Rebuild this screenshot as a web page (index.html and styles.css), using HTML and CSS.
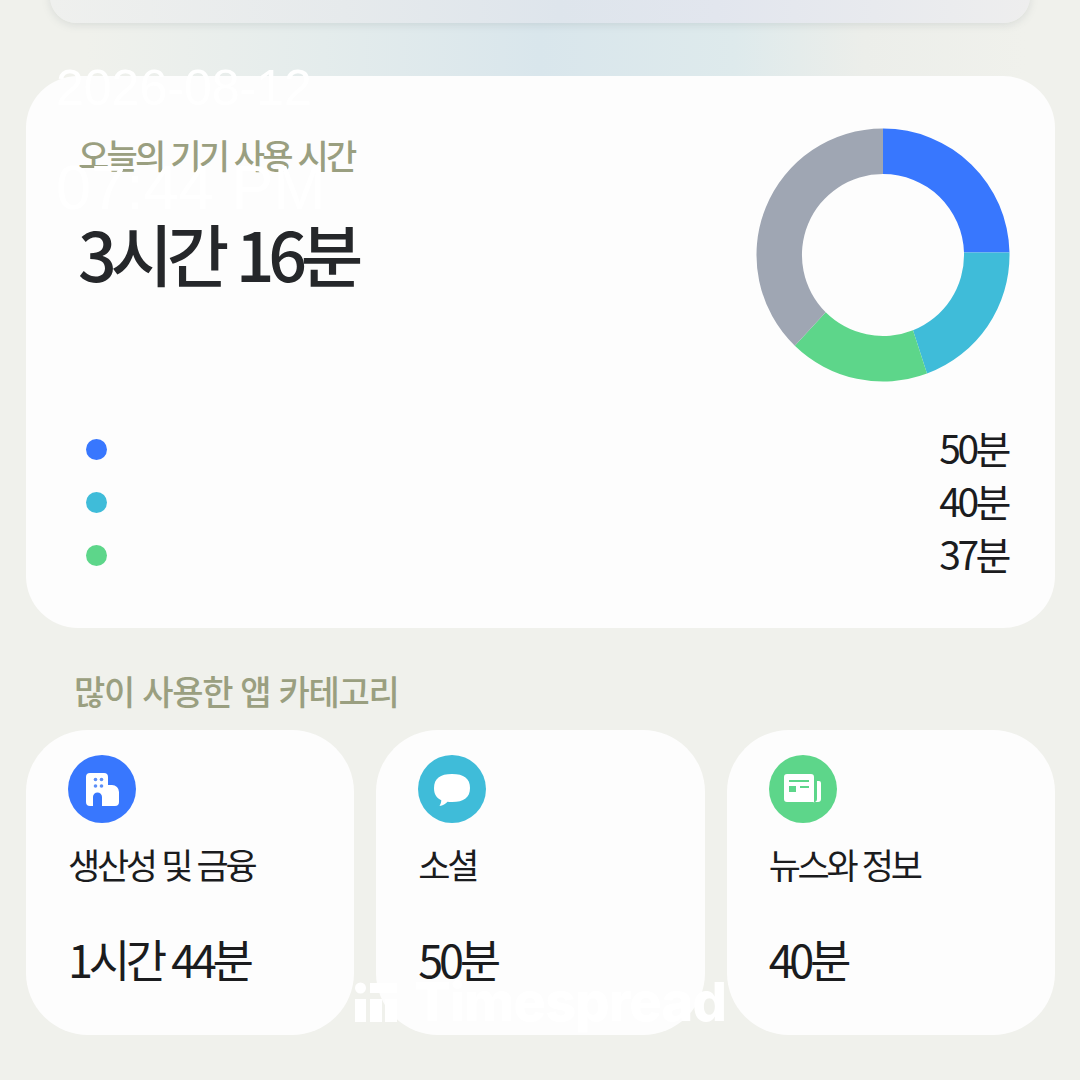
FILE: index.html
```html
<!DOCTYPE html>
<html lang="ko">
<head>
<meta charset="utf-8">
<title>기기 사용 시간</title>
<link rel="stylesheet" href="styles.css">
</head>
<body>
<div class="page">
  <div class="strip"><div class="topcard"></div></div>

  <section class="main">
    <div class="head">
      <div class="head-text">
        <div class="label">오늘의 기기 사용 시간</div>
        <div class="total">3시간 16분</div>
      </div>
      <svg class="donut" width="254" height="254" viewBox="0 0 254 254">
        <path d="M127 .5A126.500 126.500 0 0 1 253.500 124.500L208 124.500A81 81 0 0 0 127 46Z" fill="#3877fe"/>
        <path d="M253.500 124.500A126.500 126.500 0 0 1 171 245.600L157 202.200A81 81 0 0 0 208 124.500Z" fill="#3fbcd9"/>
        <path d="M171 245.600A126.500 126.500 0 0 1 38.800 217.700L69.700 184.300A81 81 0 0 0 157 202.200Z" fill="#5dd68a"/>
        <path d="M38.800 217.700A126.500 126.500 0 0 1 127 .5L127 46A81 81 0 0 0 69.700 184.300Z" fill="#9fa6b3"/>
      </svg>
    </div>
    <ul class="legend">
      <li class="legend-row"><span class="dot dot-blue"></span><span class="value">50분</span></li>
      <li class="legend-row"><span class="dot dot-teal"></span><span class="value">40분</span></li>
      <li class="legend-row"><span class="dot dot-green"></span><span class="value">37분</span></li>
    </ul>
  </section>

  <h2 class="section-title">많이 사용한 앱 카테고리</h2>

  <div class="cards">
    <article class="card">
      <span class="icon dot-blue">
        <svg width="40" height="40" viewBox="0 0 40 40">
          <path fill="#fff" d="M8 4H22a4 4 0 0 1 4 4V16H30a7 7 0 0 1 7 7V33a4 4 0 0 1-4 4H20V28a4.500 4.500 0 0 0-9 0V37H8a4 4 0 0 1-4-4V8a4 4 0 0 1 4-4Z"/>
          <g fill="#5d8ff8"><circle cx="13.500" cy="10.500" r="1.800"/><circle cx="19.500" cy="10.500" r="1.800"/><circle cx="13.500" cy="17" r="1.800"/><circle cx="19.500" cy="17" r="1.800"/></g>
        </svg>
      </span>
      <div class="name">생산성 및 금융</div>
      <div class="time">1시간 44분</div>
    </article>
    <article class="card">
      <span class="icon dot-teal">
        <svg width="40" height="40" viewBox="0 0 40 40"><path fill="#fff" d="M20 5C32 5 38 9.500 38 19S32 33 20 33C18.400 33 16.900 32.900 15.500 32.700 13.500 34.800 11 36.400 7.500 37 8.600 35.200 9.200 33.300 9.300 31.300 4.400 29 2 25 2 19 2 9.500 8 5 20 5Z"/></svg>
      </span>
      <div class="name">소셜</div>
      <div class="time">50분</div>
    </article>
    <article class="card">
      <span class="icon dot-green">
        <svg width="40" height="40" viewBox="0 0 40 40">
          <path fill="#fff" fill-rule="evenodd" d="M4 5H28a3 3 0 0 1 3 3V33H4a3 3 0 0 1-3-3V8a3 3 0 0 1 3-3ZM6 11v2H26V11ZM6 17v6h7V17ZM17 17v2h9V17Z"/>
          <path fill="#fff" d="M34 12h2a2 2 0 0 1 2 2V30a3 3 0 0 1-3 3H30a3 3 0 0 0 4-3Z"/>
        </svg>
      </span>
      <div class="name">뉴스와 정보</div>
      <div class="time">40분</div>
    </article>
  </div>

  <div class="stamp">
    <div class="stamp-date">2026-08-12</div>
    <div class="stamp-time">07:44 PM</div>
  </div>
  <div class="brand">
    <svg width="42" height="40" viewBox="0 0 42 40"><circle cx="5.500" cy="6" r="5.500" fill="#fff"/><rect y="17" width="11" height="23" fill="#fff"/><path fill="#fff" d="M15 1H42V11H15ZM15 17H27V40H15ZM30 17H42V40H30Z"/></svg>
    <span>Timespread</span>
  </div>
</div>
</body>
</html>
```
FILE: styles.css
```css
* { box-sizing: border-box; }
html, body { margin: 0; padding: 0; }
body { font-family: "Noto Sans CJK KR", "Noto Sans", sans-serif; background: #f0f1ec; }
.page { position: relative; width: 1080px; height: 1080px; overflow: hidden; background: #f0f1ec; }

.strip {
  display: flow-root;
  height: 76px;
  padding: 0 50px;
  background: linear-gradient(90deg, #f0f1ec 8%, #e4ecec 30%, #d9e6ec 50%, #deeaec 68%, #eceeea 80%, #f0f1ec 95%);
}
.topcard {
  height: 53px;
  margin-top: -30px;
  border-radius: 50px;
  background: linear-gradient(90deg, #eff0ee 0%, #e6eaec 30%, #dee5ec 52%, #e2e6ee 68%, #eeeeee 100%);
  box-shadow: 0 2px 8px rgba(110, 120, 125, .18);
}

.main {
  margin: 0 25px 0 26px;
  height: 552px;
  padding: 52px 45px 0 52px;
  background: #fdfdfd;
  border-radius: 52px;
}
.head { display: flex; justify-content: space-between; align-items: flex-start; height: 254px; }
.head-text { padding-top: 2px; }
.label { font-size: 34px; line-height: 50px; font-weight: 500; color: #9a9f80; letter-spacing: -2.800px; }
.total { font-size: 68px; line-height: 84px; font-weight: 500; color: #25272a; letter-spacing: -6.300px; margin-top: 31px; }
.donut { display: block; }

.legend { list-style: none; margin: 41px 0 0; padding: 0 2px 0 8px; }
.legend-row { display: flex; justify-content: space-between; align-items: center; height: 53px; }
.dot { display: block; width: 21px; height: 21px; border-radius: 50%; }
.dot-blue { background: #3877fe; }
.dot-teal { background: #3fbcd9; }
.dot-green { background: #5dd68a; }
.value { padding-bottom: 6px; font-size: 39px; line-height: 50px; font-weight: 400; color: #1b1c1e; letter-spacing: -3.500px; }

.section-title { margin: 40px 0 16px 74px; height: 46px; font-size: 34px; line-height: 46px; font-weight: 500; color: #9a9f80; letter-spacing: -1.300px; }

.cards { display: grid; grid-template-columns: repeat(3, 1fr); gap: 22px; margin: 0 25px 0 26px; }
.card { height: 305px; padding: 25px 0 0 42px; background: #fdfdfd; border-radius: 62px; }
.icon { display: flex; align-items: center; justify-content: center; width: 68px; height: 68px; border-radius: 50%; }
.name { margin-top: 16px; font-size: 35px; line-height: 50px; color: #1b1c1e; letter-spacing: -3.300px; }
.time { margin-top: 39px; font-size: 45px; line-height: 62px; color: #1b1c1e; letter-spacing: -4.300px; }

.stamp { position: absolute; left: 56px; top: 58px; color: #fff; font-family: "Liberation Sans", sans-serif; }
.stamp-date { font-size: 50px; line-height: 60px; }
.stamp-time { margin-top: 34px; font-size: 63px; line-height: 70px; }
.brand { position: absolute; left: 355px; top: 982px; display: flex; align-items: center; gap: 17px; color: #fff; font-family: "Inter", "Liberation Sans", sans-serif; font-weight: 800; font-size: 54px; line-height: 40px; letter-spacing: -.8px; }
```
